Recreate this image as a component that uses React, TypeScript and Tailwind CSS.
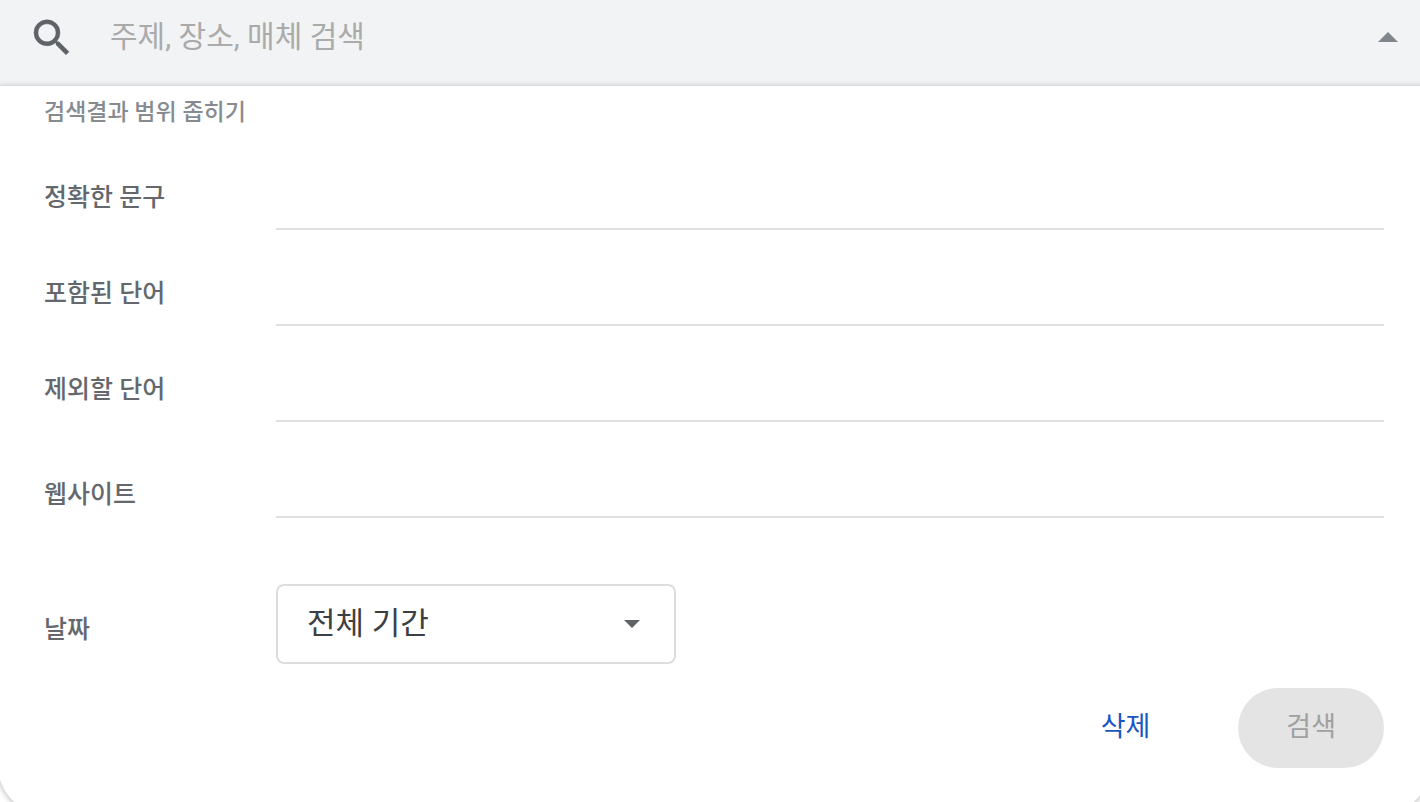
import { useState } from "react";

type Field = { id: string; label: string; labelClass: string };

const fields: Field[] = [
  { id: "exact-phrase", label: "정확한 문구", labelClass: "pb-4" },
  { id: "has-words", label: "포함된 단어", labelClass: "pb-4" },
  { id: "exclude-words", label: "제외할 단어", labelClass: "pb-4" },
  { id: "website", label: "웹사이트", labelClass: "pb-[7px]" },
];

const labelText = "w-58 shrink-0 text-[25px] leading-8 font-medium text-[#64686d]";

export default function App() {
  const [period, setPeriod] = useState("all");

  return (
    <div className="min-h-screen overflow-hidden bg-white font-['Roboto','Noto_Sans_CJK_KR',sans-serif]">
      <form className="h-screen overflow-hidden" onSubmit={(e) => e.preventDefault()}>
        <div className="flex h-[86px] items-center bg-[#f1f3f4] pr-5 pb-3 pl-7">
          <button type="submit" aria-label="검색" className="shrink-0">
            <svg viewBox="0 -0.4 24 24" className="size-12 fill-[#5f6368] stroke-[#5f6368]" strokeWidth="0.25">
              <path d="M15.5 14h-.79l-.28-.27A6.471 6.471 0 0 0 16 9.5 6.5 6.5 0 1 0 9.5 16c1.61 0 3.09-.59 4.23-1.57l.27.28v.79l5 4.99L20.49 19l-4.99-5zm-6 0C7.01 14 5 11.99 5 9.5S7.01 5 9.5 5 14 7.01 14 9.5 11.99 14 9.5 14z" />
            </svg>
          </button>
          <input
            type="text"
            aria-label="주제, 장소, 매체 검색"
            placeholder="주제, 장소, 매체 검색"
            className="ml-8 h-12 min-w-0 flex-1 bg-transparent pb-0.5 pl-0.5 text-[30px] text-[#3c4043] outline-none placeholder:text-[#aaaaaa]"
          />
          <button type="button" aria-label="고급 검색 닫기" className="flex h-12 w-6 shrink-0 items-center justify-center">
            <svg viewBox="0 0 20 10" className="h-[10px] w-5 fill-[#80868b]">
              <path d="M0 10 10 0l10 10z" />
            </svg>
          </button>
        </div>

        <section className="relative -mr-2.5 -ml-0.5 rounded-b-[48px] bg-white pr-[46px] pb-[46px] pl-[46px] shadow-[0_1px_6px_rgba(0,0,0,0.3)]">
          <h2 className="pt-[11px] text-[23px] leading-8 font-medium text-[#868b90]">검색결과 범위 좁히기</h2>
          <div className="pt-[5px]">
            {fields.map((field) => (
              <div key={field.id} className="flex h-24 items-end">
                <label htmlFor={field.id} className={`${labelText} ${field.labelClass}`}>
                  {field.label}
                </label>
                <input
                  id={field.id}
                  type="text"
                  className="h-16 min-w-0 flex-1 border-b-2 border-[#e0e0e0] bg-transparent text-[25px] text-[#3c4043] outline-none"
                />
              </div>
            ))}
          </div>

          <div className="flex items-center pt-[66px]">
            <label htmlFor="period" className={`${labelText} pt-3`}>
              날짜
            </label>
            <div className="relative w-100">
              <select
                id="period"
                value={period}
                onChange={(e) => setPeriod(e.target.value)}
                className="h-20 w-full appearance-none rounded-lg border-2 border-[#dddddd] bg-white px-[29px] text-[31px] text-[#3c4043] outline-none"
              >
                <option value="all">전체 기간</option>
                <option value="hour">지난 1시간</option>
                <option value="day">지난 1일</option>
                <option value="week">지난 1주</option>
                <option value="year">지난 1년</option>
              </select>
              <svg viewBox="0 0 16 8" className="pointer-events-none absolute top-9 right-9 h-2 w-4 fill-[#5f6368]">
                <path d="M0 0h16L8 8z" />
              </svg>
            </div>
          </div>

          <div className="flex justify-end gap-10 pt-6">
            <button type="button" className="h-20 px-12 pb-0.5 text-[27px] text-[#1a55c4]">
              삭제
            </button>
            <button
              type="submit"
              disabled
              className="h-20 rounded-full bg-[#e4e4e4] px-12 pb-0.5 text-[27px] text-[#a0a0a0]"
            >
              검색
            </button>
          </div>
        </section>
      </form>
    </div>
  );
}
